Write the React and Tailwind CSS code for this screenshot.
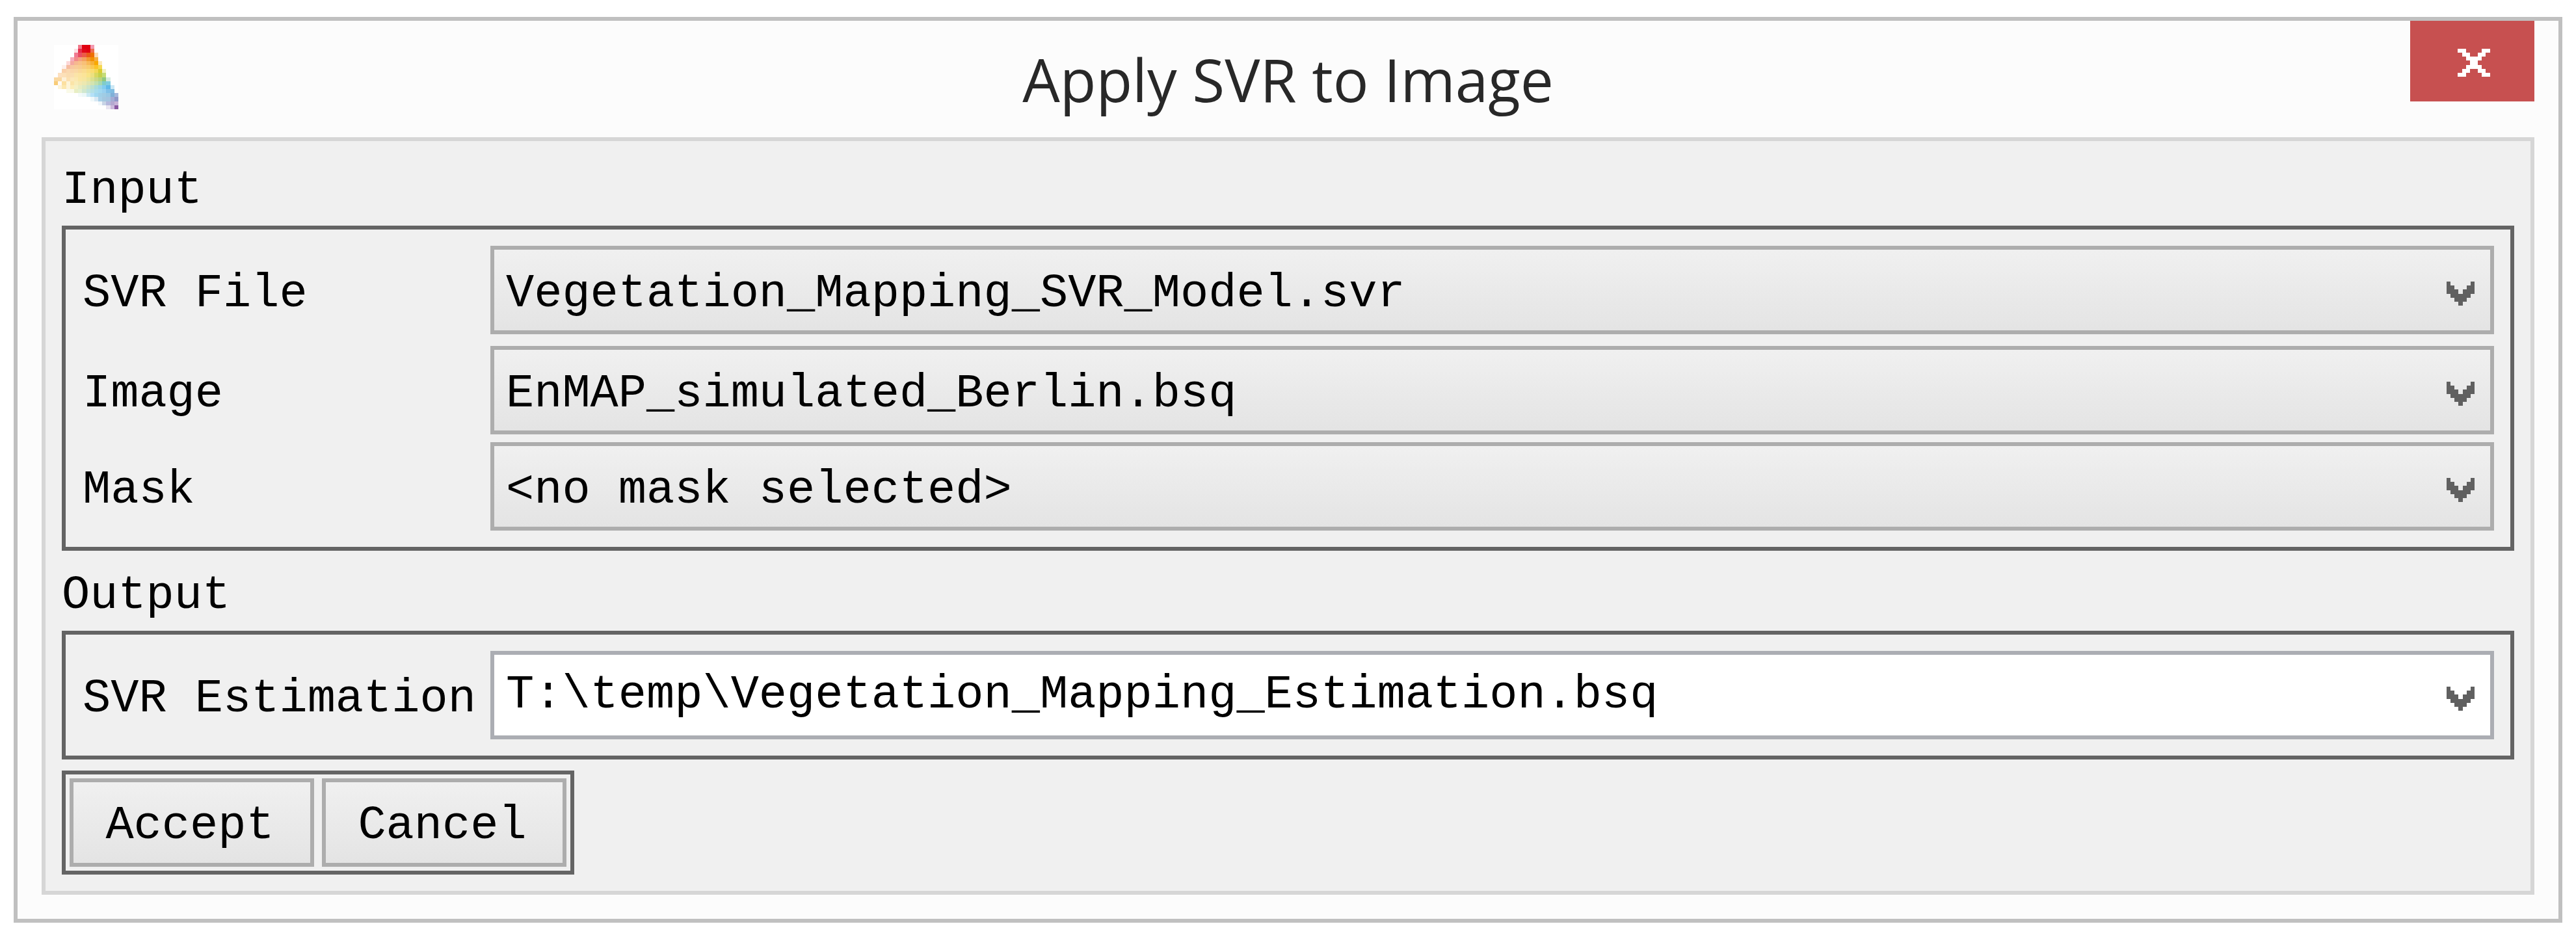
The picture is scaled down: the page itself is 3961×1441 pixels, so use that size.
import React from 'react';

// 16x16 app icon, one hex colour per pixel, offset is the first filled column
const logoRows = [
  { offset: 6, colors: ['f0788a', 'e00010', 'e00010', 'f29ab0'] },
  { offset: 5, colors: ['fbe0e4', 'e62f4c', 'e00818', 'e00010', 'ee6e50'] },
  { offset: 5, colors: ['f07a90', 'ea4c62', 'ec5a48', 'ea5a18', 'ee7000', 'fadcb8'] },
  { offset: 4, colors: ['f6aebb', 'f28a88', 'f4a080', 'f4a060', 'f29830', 'f29000', 'f6b040'] },
  { offset: 3, colors: ['fcd8d8', 'f4a8a0', 'f6b890', 'f8c088', 'f8c078', 'f8b858', 'f6b038', 'f8a800', 'fce8b8'] },
  { offset: 2, colors: ['fdf0ec', 'f6bca0', 'f8c8a0', 'f8cc98', 'f8cc90', 'f8cc80', 'f8cc70', 'fac850', 'fcc428', 'f6d850'] },
  { offset: 2, colors: ['fad0a8', 'fad8b0', 'fad6a8', 'fad8a4', 'fad898', 'fadc90', 'fadc80', 'fadc70', 'f2d858', 'd8cc30', 'f2f0c0'] },
  { offset: 1, colors: ['fce0c0', 'fce0b8', 'fadcb0', 'fadeb0', 'fbe4a8', 'fbe4a0', 'fbe498', 'f8e488', 'ece080', 'd8d860', 'c4d04c', 'c4dc78'] },
  { offset: 0, colors: ['fad8a0', 'fad8a0', 'fdf0d8', 'fce0b0', 'fce8b8', 'fbe8b0', 'fae6a0', 'f6e6a0', 'ece498', 'dce090', 'ccd888', 'b8d480', '90c880', 'd8ece0'] },
  { offset: 0, colors: ['f8cc78', 'fffaf4', 'fce0a0', 'fdf4d8', 'fbe4a8', 'f8ecb8', 'f4e8b0', 'ece8b0', 'e0e4b0', 'd4e4b0', 'c0e0b0', 'a8d8b0', '80ccc8', '80cce0'] },
  { offset: 1, colors: ['fef4d8', 'fce8b0', 'fdf4d8', 'fceeb8', 'f4f0c4', 'e8ecc0', 'dce8c0', 'cce4c8', 'bce0d0', 'a8dcdc', '98d4e8', '80ccf0', '60b8e8', 'cce8f4'] },
  { offset: 3, colors: ['fafae8', 'fafae8', 'e8eec4', 'e4f0d0', 'd0e8d0', 'c0e4dc', 'b4e0e4', 'a8dcec', 'a0d8f0', '98d0f0', '80c0e8', '80bce0'] },
  { offset: 6, colors: ['f4fafa', 'ecf8f8', 'cceaf4', 'b4e0f8', 'a0d8f0', 'a0d0e8', 'a0cce4', '98c8e4', '80b0d8', 'a8b8dc'] },
  { offset: 9, colors: ['f0f8fa', 'd8e8f4', 'a8d0e8', 'a4c8e0', 'a4c4e0', 'a4acd4', '9098c8'] },
  { offset: 11, colors: ['f0f6fa', 'c8d4e6', 'b4b8dc', 'b4a8d0', 'c8b4d8'] },
  { offset: 13, colors: ['e8e4f0', 'ccb8dc', '8858a0'] },
];

const inputs = [
  { id: 'svr-file', label: 'SVR File', value: 'Vegetation_Mapping_SVR_Model.svr', row: 'mb-[18px]' },
  { id: 'image', label: 'Image', value: 'EnMAP_simulated_Berlin.bsq', row: 'mb-3' },
  { id: 'mask', label: 'Mask', value: '<no mask selected>', row: '' },
];

const Logo = () => (
  <svg viewBox="0 0 16 16" className="w-[99px] h-[99px] bg-white" shapeRendering="crispEdges" aria-hidden="true">
    {logoRows.map((row, y) =>
      row.colors.map((color, i) => (
        <rect key={`${y}-${i}`} x={row.offset + i} y={y} width="1" height="1" fill={`#${color}`} />
      ))
    )}
  </svg>
);

const CloseIcon = () => (
  <svg viewBox="0 0 8 7" className="w-[50px] h-[43px]" fill="#ffffff" shapeRendering="crispEdges" aria-hidden="true">
    <path d="M0 0h2v1h1v1h2v-1h1v-1h2v1h-1v1h-1v1h-1v1h1v1h1v1h1v1h-2v-1h-1v-1h-2v1h-1v1h-2v-1h1v-1h1v-1h1v-1h-1v-1h-1v-1h-1z" />
  </svg>
);

const Chevron = () => (
  <svg viewBox="0 0 7 6" className="w-[43px] h-[37px]" fill="#606060" shapeRendering="crispEdges" aria-hidden="true">
    <path d="M0 0h1v1h1v1h1v1h1v-1h1v-1h1v-1h1v3h-1v1h-1v1h-1v1h-1v-1h-1v-1h-1v-1h-1z" />
  </svg>
);

const Group = ({ children }) => (
  <div className="border-6 border-[#646464] pl-[26px] pr-[25px] py-[25px]">{children}</div>
);

const labelClass = 'w-[627px] shrink-0 pt-3 whitespace-nowrap';

const buttonClass =
  'w-[376px] h-[136px] pt-2.5 pr-1.5 border-6 border-[#adadad] bg-linear-to-b from-[#f0f0f0] to-[#e4e4e4] text-center';

const App = () => {
  return (
    <div className="bg-white px-[21px] pt-[26px] pb-[22px]">
      <main className="border-6 border-[#c0c0c0] bg-[#fcfcfc]">
        <header className="grid grid-cols-[228px_1fr_228px] h-[179px]">
          <div className="pl-14 pt-[37px]">
            <Logo />
          </div>
          <h1 className="pt-[26px] text-center text-[91px] leading-[128px] text-[#282828] font-['Open_Sans',sans-serif] whitespace-nowrap">
            Apply SVR to Image
          </h1>
          <button
            type="button"
            aria-label="Close"
            className="w-[191px] h-[124px] pt-1 pl-1 flex items-center justify-center bg-[#c75050]"
          >
            <CloseIcon />
          </button>
        </header>

        <form className="mx-[37px] mb-[37px] border-6 border-[#d6d6d6] bg-[#f0f0f0] px-[25px] pt-9 pb-[25px] text-[72px] leading-[80px] text-black font-['Liberation_Mono',monospace]">
          <h2 className="mb-3.5">Input</h2>
          <Group>
            {inputs.map((item) => (
              <div key={item.id} className={`flex items-center ${item.row}`}>
                <label htmlFor={item.id} className={labelClass}>{item.label}</label>
                <div className="relative flex-1">
                  <select
                    id={item.id}
                    className="block appearance-none w-full h-[136px] pl-[18px] pt-3 border-6 border-[#adadad] bg-linear-to-b from-[#f0f0f0] to-[#e4e4e4]"
                  >
                    <option>{item.value}</option>
                  </select>
                  <span className="absolute inset-y-0 right-[30px] pt-2.5 flex items-center pointer-events-none">
                    <Chevron />
                  </span>
                </div>
              </div>
            ))}
          </Group>

          <h2 className="mt-[29px] mb-3.5">Output</h2>
          <Group>
            <div className="flex items-center">
              <label htmlFor="estimation" className={labelClass}>SVR Estimation</label>
              <div className="flex flex-1 h-[136px] border-6 border-[#abadb3] bg-white">
                <input
                  id="estimation"
                  type="text"
                  defaultValue="T:\temp\Vegetation_Mapping_Estimation.bsq"
                  className="flex-1 min-w-0 pl-[18px]"
                />
                <button type="button" aria-label="Browse" className="pt-2.5 pr-6 flex items-center">
                  <Chevron />
                </button>
              </div>
            </div>
          </Group>

          <div className="mt-[17px] inline-flex gap-3 border-6 border-[#646464] p-1.5 align-top">
            <button type="button" className={buttonClass}>Accept</button>
            <button type="button" className={buttonClass}>Cancel</button>
          </div>
        </form>
      </main>
    </div>
  );
};

export default App;
